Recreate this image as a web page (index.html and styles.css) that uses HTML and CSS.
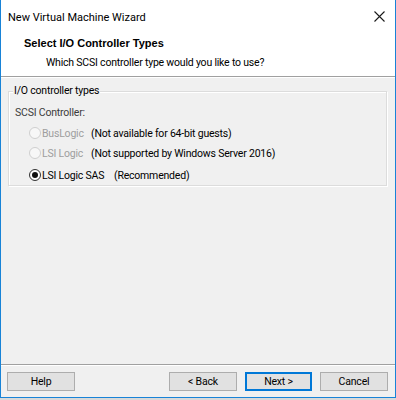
FILE: index.html
```html
<!DOCTYPE html>
<html>
<head>
<meta charset="utf-8">
<link rel="stylesheet" href="styles.css">
</head>
<body>
<div class="window">
  <div class="top">
    <div class="titlebar">
      <span class="title">New Virtual Machine Wizard</span>
      <svg class="close" width="11" height="11" viewBox="0 0 11 11"><path d="M0.5 0.5 L10.5 10.5 M10.5 0.5 L0.5 10.5" stroke="#1a1a1a" stroke-width="1.1" fill="none"/></svg>
    </div>
    <div class="header">
      <div class="h-title">Select I/O Controller Types</div>
      <div class="h-sub">Which SCSI controller type would you like to use?</div>
    </div>
  </div>
  <div class="body">
    <div class="group">
      <div class="legend">I/O controller types</div>
      <div class="label">SCSI Controller:</div>
      <div class="opt disabled">
        <span class="radio"></span><span class="name n1">BusLogic</span><span class="note">(Not available for 64-bit guests)</span>
      </div>
      <div class="opt disabled">
        <span class="radio"></span><span class="name n1">LSI Logic</span><span class="note">(Not supported by Windows Server 2016)</span>
      </div>
      <div class="opt">
        <span class="radio on"></span><span class="name n2">LSI Logic SAS</span><span class="note">(Recommended)</span>
      </div>
    </div>
  </div>
  <div class="footer">
    <button class="btn">Help</button>
    <div class="spacer"></div>
    <button class="btn">&lt; Back</button>
    <button class="btn default">Next &gt;</button>
    <button class="btn">Cancel</button>
  </div>
</div>
</body>
</html>
```
FILE: styles.css
```css
html, body { margin: 0; padding: 0; }
body {
  width: 396px; height: 400px;
  background: #d9d9d9;
  font-family: Roboto, "Liberation Sans", sans-serif;
  font-size: 10.5px;
  letter-spacing: -0.2px;
  color: #000;
  overflow: hidden;
}
.window {
  box-sizing: border-box;
  width: 396px; height: 398px;
  border: 1px solid #1883d7;
  border-top: none;
  background: #f0f0f0;
  display: grid;
  grid-template-rows: 77px 1fr 33px;
}
.top {
  background: #fff;
  border-bottom: 1px solid #a0a0a0;
  box-shadow: 0 1px 0 #fff;
}
.titlebar {
  height: 35px;
  display: flex; align-items: center; justify-content: space-between;
  padding: 0 10px 0 7px;
}
.title { font-size: 11px; letter-spacing: 0; line-height: 14px; }
.close { margin-top: -2px; }
.header { padding-left: 23px; }
.h-title { font-family: "Liberation Sans", Arial, sans-serif; font-weight: bold; font-size: 11px; letter-spacing: 0; line-height: 16px; }
.h-sub { padding-left: 22px; line-height: 16px; margin-top: 4px; }
.body {
  padding: 14px 8px 0 7px;
}
.group {
  position: relative;
  padding: 0 0 0 6px;
  border: 1px solid #dcdcdc;
  box-shadow: inset 1px 1px 0 #fff, 1px 1px 0 #fff;
  height: 95px;
  box-sizing: border-box;
}
.legend {
  position: absolute; left: 4px; top: -8px;
  background: #f0f0f0;
  padding: 0 1px;
  line-height: 14px;
}
.label { line-height: 14px; margin-top: 14px; color: #3c3c3c; }
.opt { display: flex; align-items: center; height: 20px; margin-left: 14px; }
.label + .opt { margin-top: 3px; }
.opt:last-child { margin-top: 2px; }
.radio {
  flex-shrink: 0;
  box-sizing: border-box;
  width: 12px; height: 12px; border-radius: 50%;
  border: 1px solid #333;
  background: #fff;
  margin-right: 1px;
  display: flex; align-items: center; justify-content: center;
}
.disabled .radio { border-color: #cfcfcf; background: #f7f7f7; }
.radio.on::after { content: ""; width: 6px; height: 6px; border-radius: 50%; background: #111; }
.name { flex-shrink: 0; white-space: nowrap; }
.note { white-space: nowrap; }
.disabled .name { color: #9e9e9e; }
.n1 { width: 49px; }
.n2 { width: 72px; }
.footer {
  border-top: 1px solid #a0a0a0;
  box-shadow: inset 0 1px 0 #fff;
  display: flex; align-items: flex-start;
  padding: 7px 7px 0 6px;
  gap: 8px;
}
.spacer { flex: 1; }
.btn {
  box-sizing: border-box;
  width: 68px; height: 19px;
  margin: 0; padding: 0;
  border: 1px solid #adadad;
  background: #e1e1e1;
  font-family: inherit; font-size: 10.5px; letter-spacing: -0.2px; color: #000;
  line-height: 16px;
}
.btn.default { border: 2px solid #0078d7; width: 67px; }
```
